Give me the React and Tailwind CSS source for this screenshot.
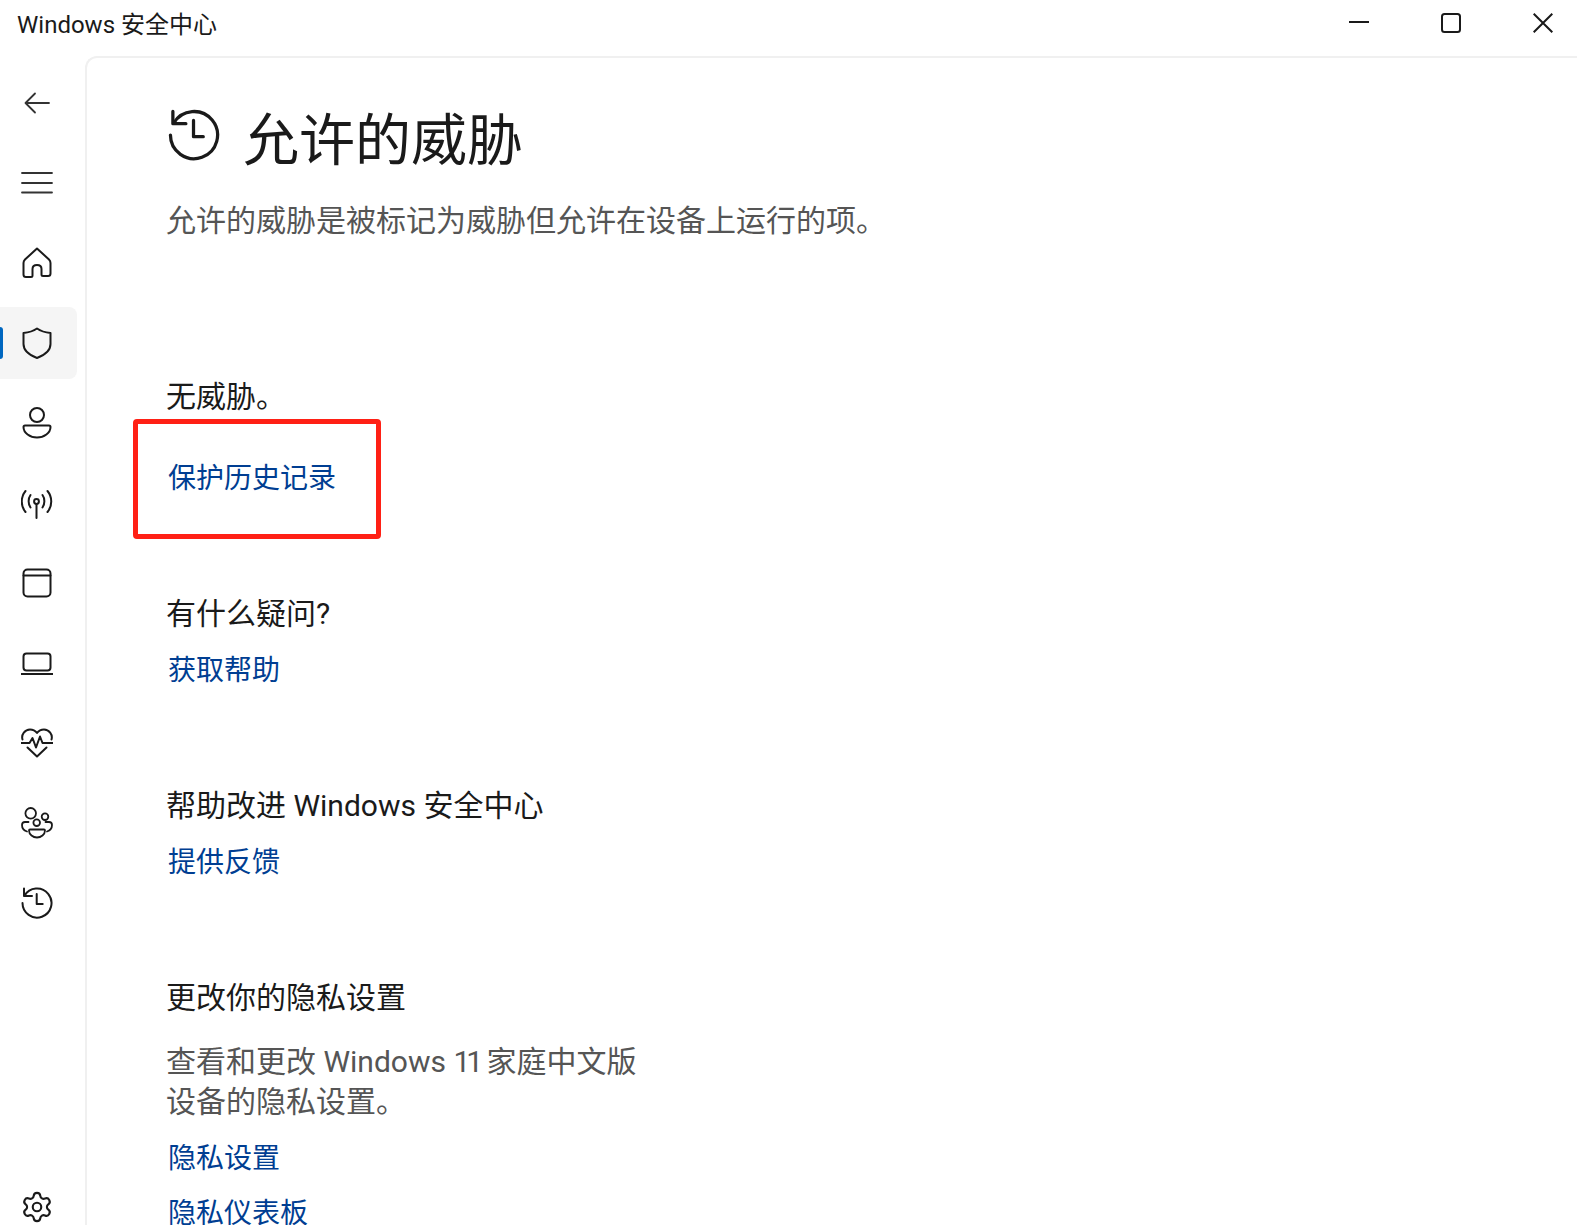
import React from 'react';
import { Settings } from 'lucide-react';

const FONT = "font-['Roboto','Noto_Sans_CJK_SC',sans-serif]";

const Icon = ({ children, size = 32, sw = 2, className = '' }) => (
    <svg width={size} height={size} viewBox="0 0 32 32" fill="none" stroke="currentColor" strokeWidth={sw} strokeLinecap="round" strokeLinejoin="round" className={className}>
        {children}
    </svg>
);

const HistoryIcon = (props) => (
    <Icon {...props}>
        <path d="M3.5 8.7A14.5 14.5 0 1 1 1.5 16" />
        <path d="M3 1.5V9h8" />
        <path d="M15.7 7v10h6" />
    </Icon>
);

const navItems = [
    { key: 'back', icon: <Icon sw={1.8} className="text-[#333]"><path d="M28 16H5M14 6.5 4.5 16l9.5 9.5" /></Icon> },
    { key: 'menu', icon: <Icon sw={1.8} className="text-[#333]"><path d="M1 6h30M1 16h30M1 25.5h30" /></Icon> },
    { key: 'home', icon: <Icon><path d="M16 1.5 28 12.5q1.5 1.5 1.5 3.5v10.5q0 2.5-2.5 2.5h-5q-1.500 0-1.500-1.500V22q0-4-4.500-4t-4.500 4v6.500q0 1.500-1.500 1.500H5q-2.500 0-2.500-2.500V16q0-2 1.500-3.500Z" /></Icon> },
    { key: 'shield', active: true, icon: <Icon><path d="M16 1.500C12.500 4 8 5.500 2.500 6v11C2.500 23.500 8 28 16 31c8-3 13.500-7.500 13.500-14V6C24 5.500 19.500 4 16 1.500Z" /></Icon> },
    { key: 'account', icon: <Icon><circle cx="16" cy="8" r="7" /><path d="M4 18.500h24q1.500 0 1.500 1.500c0 6-6.500 10.500-13.500 10.500S2.500 26 2.500 20q0-1.500 1.500-1.500Z" /></Icon> },
    { key: 'network', icon: <Icon><circle cx="15.500" cy="14.500" r="2.400" /><path d="M15.500 17v14M9.500 8c-2.500 3.500-2.500 9 0 12.500M21.500 8c2.500 3.500 2.500 9 0 12.500M4.500 4C-.5 10-.5 19 4.500 25M26.500 4c5 6 5 15 0 21" /></Icon> },
    { key: 'app', icon: <Icon><rect x="2.500" y="2.500" width="27" height="27" rx="4" /><path d="M2.500 8.500h27" /></Icon> },
    { key: 'device', icon: <Icon><rect x="2.500" y="6.500" width="27" height="17" rx="3" /><path d="M.5 27h31" /></Icon> },
    { key: 'health', icon: <Icon><path d="M1.500 12.500C0 7.500 4 2.500 9 2.500c3 0 5.500 1.500 7 3.500 1.500-2 4-3.500 7-3.500 5 0 9 5 7.500 10" /><path d="M.5 16h8l3-5 3.500 9.500 4-11 2.500 6.500h10.500" /><path d="M6.500 20.500 16 29.500l9.500-9" /></Icon> },
    { key: 'family', icon: <Icon sw={1.8}><circle cx="9.700" cy="6.300" r="5.300" /><circle cx="24" cy="9.700" r="3.300" /><circle cx="15.700" cy="15.700" r="3.300" /><path d="M9 22.500h14q1 0 1 1c0 4-4 7-8 7s-8-3-8-7q0-1 1-1Z" /><path d="M7.500 15H4q-3 0-3 3c0 3 2 5.500 5 6.500M24.500 15H28q3 0 3 3c0 3-2 5.500-5 6.500" /></Icon> },
    { key: 'history', icon: <HistoryIcon /> },
];

const NavRow = ({ active, children }) => (
    <div className={`relative flex h-[72px] w-[77px] items-center pl-[21px] text-[#1a1a1a] rounded-r-lg ${active ? 'bg-[#f5f5f5]' : ''}`}>
        {active && <span className="absolute left-0 top-[20px] h-[32px] w-[3px] rounded-r-sm bg-[#0067c0]" />}
        {children}
    </div>
);

const Link = ({ className = '', children }) => (
    <a className={`block pl-[2px] text-[28px] leading-[40px] text-[#003e92] ${className}`}>{children}</a>
);

const Heading = ({ className = '', children }) => (
    <h2 className={`text-[30px] leading-[40px] text-[#1a1a1a] ${className}`}>{children}</h2>
);

const App = () => {
    return (
        <div className={`flex h-[1225px] w-[1577px] flex-col overflow-hidden bg-white ${FONT}`}>
            {/* title bar */}
            <div className="flex h-[56px] shrink-0 items-start justify-between">
                <span className="pl-[17px] pt-[7px] text-[24px] leading-[36px] text-[#1a1a1a]">Windows 安全中心</span>
                <div className="flex items-start text-[#1a1a1a]">
                    <svg width="20" height="20" viewBox="0 0 20 20" className="mt-[12px]"><path d="M0 10h20" stroke="currentColor" strokeWidth="2" /></svg>
                    <svg width="20" height="20" viewBox="0 0 20 20" fill="none" className="ml-[72px] mt-[13px]"><rect x="1" y="1" width="18" height="18" rx="2.500" stroke="currentColor" strokeWidth="2" /></svg>
                    <svg width="20" height="20" viewBox="0 0 20 20" fill="none" className="ml-[72px] mr-[24px] mt-[13px]"><path d="M.7.7l18.600 18.600M19.300.7.7 19.300" stroke="currentColor" strokeWidth="2" /></svg>
                </div>
            </div>

            <div className="flex min-h-0 flex-1">
                {/* side nav */}
                <nav className="flex w-[85px] shrink-0 flex-col gap-[8px] pt-[11px]">
                    {navItems.map(item => (
                        <NavRow key={item.key} active={item.active}>{item.icon}</NavRow>
                    ))}
                    <div className="mt-auto mb-[2px] flex h-[32px] items-center pl-[20px] text-[#1a1a1a]">
                        <Settings size={34} strokeWidth={1.5} />
                    </div>
                </nav>

                {/* main panel */}
                <main className="flex-1 rounded-tl-xl border-l-2 border-t-2 border-[#f0f0f0] pl-[79px]">
                    <div className="mt-[47px] flex h-[60px] items-center">
                        <HistoryIcon size={52} sw={2} className="ml-[2px] text-[#1a1a1a]" />
                        <h1 className="ml-[23px] mt-[12px] text-[56px] leading-[60px] text-[#1a1a1a]">允许的威胁</h1>
                    </div>
                    <p className="mt-[36px] text-[30px] leading-[40px] text-[#555]">允许的威胁是被标记为威胁但允许在设备上运行的项。</p>

                    <Heading className="mt-[136px]">无威胁。</Heading>
                    <div className="relative mt-[42px]">
                        <Link>保护历史记录</Link>
                        {/* red annotation box */}
                        <div className="absolute left-[-33px] top-[-40px] h-[120px] w-[248px] rounded-[4px] border-[5px] border-[#ff2015]" />
                    </div>

                    <Heading className="mt-[95px]">有什么疑问?</Heading>
                    <Link className="mt-[17px]">获取帮助</Link>

                    <Heading className="mt-[95px]">帮助改进 Windows 安全中心</Heading>
                    <Link className="mt-[17px]">提供反馈</Link>

                    <Heading className="mt-[95px]">更改你的隐私设置</Heading>
                    <p className="mt-[24px] text-[30px] leading-[40px] text-[#555]">查看和更改 Windows <span className="tracking-[-4px]">11</span> 家庭中文版<br />设备的隐私设置。</p>
                    <Link className="mt-[17px]">隐私设置</Link>
                    <Link className="mt-[15px]">隐私仪表板</Link>
                </main>
            </div>
        </div>
    );
};

export default App;
